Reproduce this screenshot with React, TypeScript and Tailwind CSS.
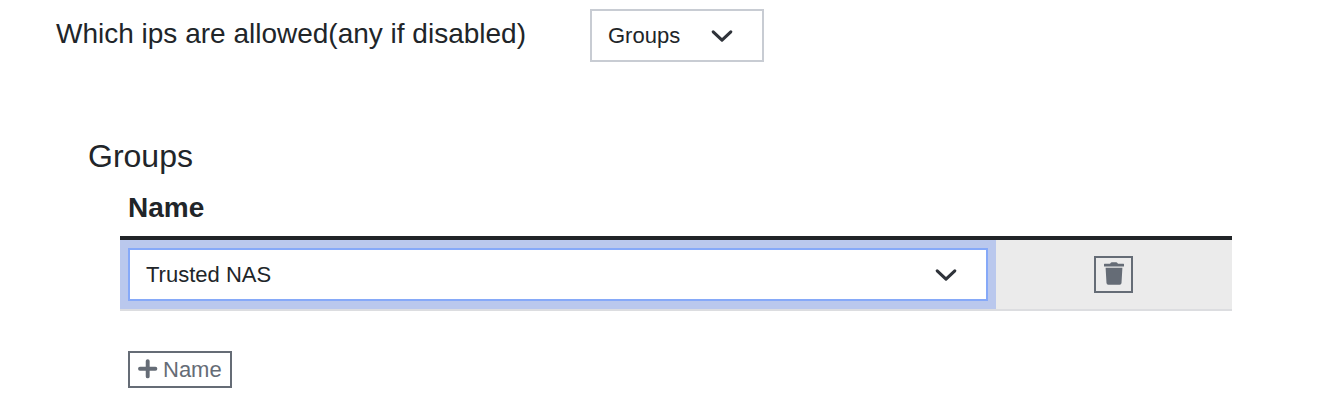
export default function App() {
  return (
    <div className="h-[416px] w-[1344px] overflow-hidden bg-white font-['Liberation_Sans',Arial,sans-serif] text-[#212529]">
      <div className="flex h-[62px] pl-[56px] pt-[9px]">
        <div className="w-[534px] text-[28px] leading-[50px]">
          <span className="whitespace-nowrap">Which ips are allowed(any if disabled)</span>
        </div>
        <div className="flex h-[53px] w-[174px] items-center justify-between border-2 border-[#c8ccd3] pl-4 pr-[29px] text-[22px]">
          <span>Groups</span>
          <Chevron />
        </div>
      </div>
      <div className="pl-[88px] pt-[74px]">
        <h2 className="text-[32px] leading-[40px]">Groups</h2>
      </div>
      <div className="ml-[120px] w-[1112px]">
        <div className="h-[64px] border-b-4 border-[#212427] pl-2 pt-[12px] text-[28px] leading-[40px] font-bold">Name</div>
        <div className="flex h-[71px] border-b-2 border-[#dcdde0] bg-[#ebebeb]">
          <div className="w-[876px] bg-[#bac8ed] p-2">
            <div className="flex h-[53px] items-center justify-between border-2 border-[#86a9f8] bg-white pl-4 pr-[29px] text-[22px]">
              <span>Trusted NAS</span>
              <Chevron />
            </div>
          </div>
          <div className="w-[236px] pl-[98px] pt-4">
            <button className="flex h-[37px] w-[39px] items-center justify-center border-2 border-[#656c76] text-[#656c76]">
              <Trash />
            </button>
          </div>
        </div>
        <button className="mt-[40px] ml-2 flex h-[37px] w-[104px] items-center gap-[5px] border-2 border-[#656c76] pl-2 text-[22px] text-[#656c76]">
          <Plus />
          <span>Name</span>
        </button>
      </div>
    </div>
  );
}

function Chevron() {
  return (
    <svg width="22" height="22" viewBox="0 0 22 22" fill="none" stroke="#2f333a" strokeWidth="3.1" strokeLinecap="round" strokeLinejoin="round">
      <path d="m2.200 6.800 8.800 8.400 8.800-8.400" />
    </svg>
  );
}

function Trash() {
  return (
    <svg width="20" height="25" viewBox="0 0 20 25" fill="currentColor">
      <path d="M.5 1.800H6l.8-1.100Q7.100.2 7.700.2h4.600q.6 0 .9.500L14 1.800h5.500q.5 0 .5.500v1.700q0 .5-.5.500H.5Q0 4.500 0 4V2.300Q0 1.800.5 1.800Z" />
      <path d="M1.600 5.800h16.800l-.9 15.200q-.1 1.700-1.800 1.700H4.300q-1.700 0-1.800-1.700Z" />
    </svg>
  );
}

function Plus() {
  return (
    <svg width="20" height="21" viewBox="0 0 20 21" fill="none" stroke="currentColor" strokeWidth="3.9" strokeLinecap="round">
      <path d="M9.700 2.100v15.300M2 9.700h15.400" />
    </svg>
  );
}
